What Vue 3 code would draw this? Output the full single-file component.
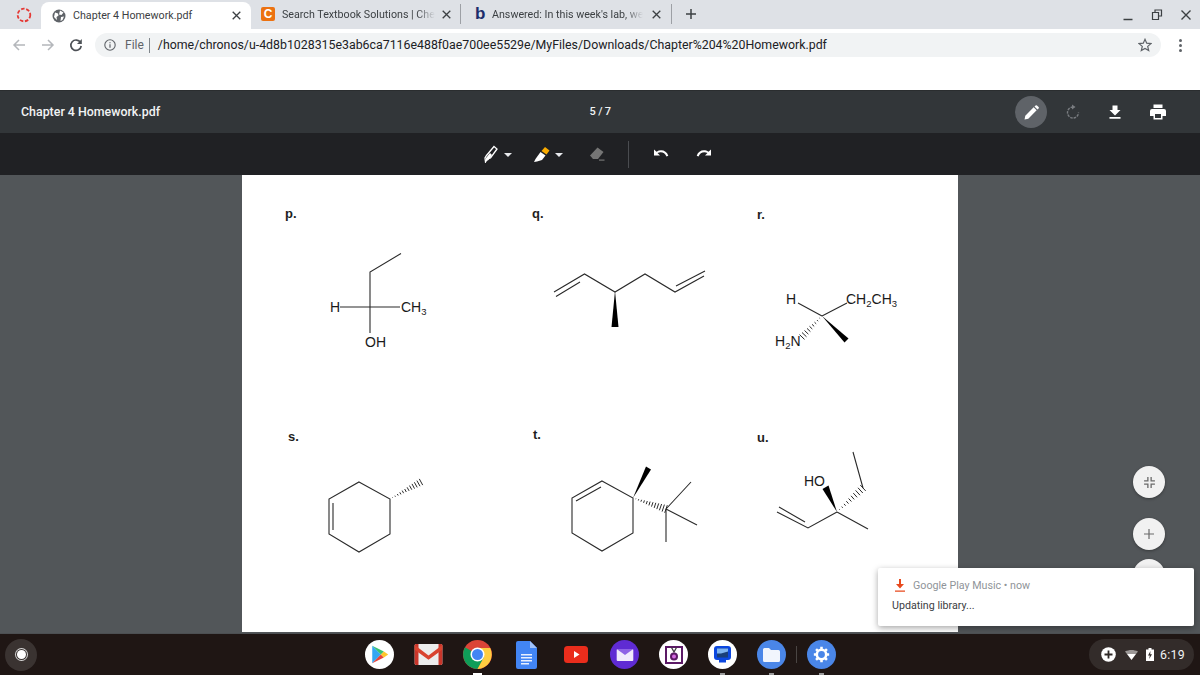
<script setup>
function hash(x1, y1, x2, y2, w, n) {
  const dx = x2 - x1
  const dy = y2 - y1
  const len = Math.hypot(dx, dy)
  const nx = -dy / len
  const ny = dx / len
  let d = ''
  for (let i = 1; i <= n; i++) {
    const t = i / n
    const x = x1 + dx * t
    const y = y1 + dy * t
    const h = (w * t) / 2
    d += `M${(x + nx * h).toFixed(1)} ${(y + ny * h).toFixed(1)}L${(x - nx * h).toFixed(1)} ${(y - ny * h).toFixed(1)}`
  }
  return d
}
const hashes = [
  hash(822, 316, 802, 337, 7, 9),
  hash(390, 499, 421, 482, 7, 12),
  hash(633, 498, 666, 509, 8, 12),
  hash(837, 512, 863, 488, 8, 10)
]
</script>

<template>
  <div class="screen">
    <div class="tabstrip">
      <div class="spinner">
        <svg width="16" height="16" viewBox="0 0 16 16"><circle cx="8" cy="8" r="6.300" fill="none" stroke="#e53935" stroke-width="1.800" stroke-dasharray="3.500 1.700"/></svg>
      </div>
      <div class="tab active">
        <svg class="fav" width="14" height="14" viewBox="0 0 14 14"><circle cx="7" cy="7" r="6.500" fill="#5f6368"/><path d="M3 3.500l3 1 .5 2-2 1.500L5 11 2 8zM8 1.500l3.500 2-2 2.500-2.500-.5zM9 8l3-.5-1.500 3.500L8.500 12z" fill="#fff"/></svg>
        <span class="tabtext">Chapter 4 Homework.pdf</span>
        <svg class="tabclose" width="9" height="9" viewBox="0 0 9 9"><path d="M.7.7l7.600 7.600M8.300.7L.7 8.300" stroke="#3c4043" stroke-width="1.300"/></svg>
      </div>
      <div class="tab second">
        <span class="cfav">C</span>
        <span class="tabtext fade">Search Textbook Solutions | Che</span>
        <svg class="tabclose" width="9" height="9" viewBox="0 0 9 9"><path d="M.7.7l7.600 7.600M8.300.7L.7 8.300" stroke="#3c4043" stroke-width="1.300"/></svg>
      </div>
      <div class="tab third">
        <span class="bfav">b</span>
        <span class="tabtext fade">Answered: In this week's lab, we</span>
        <svg class="tabclose" width="9" height="9" viewBox="0 0 9 9"><path d="M.7.7l7.600 7.600M8.300.7L.7 8.300" stroke="#3c4043" stroke-width="1.300"/></svg>
      </div>
      <div class="newtab">
        <svg width="12" height="12" viewBox="0 0 12 12"><path d="M6 1v10M1 6h10" stroke="#3c4043" stroke-width="1.500"/></svg>
      </div>
      <div class="winctl">
        <svg width="12" height="12" viewBox="0 0 12 12"><path d="M1.500 10.500h9" stroke="#3c4043" stroke-width="1.500"/></svg>
        <svg width="12" height="12" viewBox="0 0 12 12"><path d="M1.500 3.500v7h6v-7zM4 3V1h6.500v6H8" fill="none" stroke="#3c4043" stroke-width="1.200"/></svg>
        <svg width="12" height="12" viewBox="0 0 12 12"><path d="M1.500 1.500l9 9M10.500 1.500l-9 9" stroke="#3c4043" stroke-width="1.400"/></svg>
      </div>
    </div>

    <div class="toolbar">
      <div class="navbtns">
        <svg width="16" height="16" viewBox="0 0 16 16"><path d="M14 8H3M8 3L3 8l5 5" fill="none" stroke="#b4b7bb" stroke-width="1.500"/></svg>
        <svg width="16" height="16" viewBox="0 0 16 16"><path d="M2 8h11M8 3l5 5-5 5" fill="none" stroke="#b4b7bb" stroke-width="1.500"/></svg>
        <svg width="14" height="14" viewBox="0 0 14 14"><path d="M11.500 4.500A5.200 5.200 0 1 0 12.200 8" fill="none" stroke="#4d5156" stroke-width="1.700"/><path d="M12.800 1v5H8z" fill="#4d5156"/></svg>
      </div>
      <div class="omnibox">
        <svg width="12" height="12" viewBox="0 0 12 12"><circle cx="6" cy="6" r="5.200" fill="none" stroke="#5f6368" stroke-width="1.100"/><path d="M6 5.200v3.600M6 3.200v1.100" stroke="#5f6368" stroke-width="1.200"/></svg>
        <span class="file">File</span>
        <span class="osep"></span>
        <span class="url">/home/chronos/u-4d8b1028315e3ab6ca7116e488f0ae700ee5529e/MyFiles/Downloads/Chapter%204%20Homework.pdf</span>
        <svg class="star" width="14" height="14" viewBox="0 0 14 14"><path d="M7 1.300l1.700 3.900 4.200.4-3.200 2.800 1 4.100L7 10.400l-3.700 2.100 1-4.100L1.100 5.600l4.200-.4z" fill="none" stroke="#5f6368" stroke-width="1.200"/></svg>
      </div>
      <div class="dots"><i></i><i></i><i></i></div>
    </div>

    <div class="viewer">
      <div class="pdfhead">
        <span class="pdftitle">Chapter 4 Homework.pdf</span>
        <span class="pagenum">5 / 7</span>
        <div class="pdfactions">
          <span class="penbtn">
            <svg width="15" height="15" viewBox="0 0 14 14"><path d="M0.500 13.500l.7-3.500L9 2.200l2.800 2.800-7.800 7.800zM9.800 1.400l1-1a1 1 0 0 1 1.300 0l1.500 1.500a1 1 0 0 1 0 1.300l-1 1z" fill="#fff"/></svg>
          </span>
          <svg class="act" width="16" height="16" viewBox="0 0 16 16"><path d="M8 3a5.500 5.500 0 1 0 5.500 5.500" fill="none" stroke="#797c80" stroke-width="1.400" stroke-dasharray="2.500 1"/><path d="M7 .5L10.500 3 7 5.500z" fill="#797c80"/></svg>
          <svg class="act" width="16" height="16" viewBox="0 0 16 16"><path d="M5.500 1.500h5V6h3L8 11.500 2.500 6h3zM2.500 13h11v1.800h-11z" fill="#fff"/></svg>
          <svg class="act" width="18" height="18" viewBox="0 0 18 18"><path d="M4.500 1.500h9v3.500h-9zM3 6h12a2 2 0 0 1 2 2v5h-3.500v3.500h-9V13H1V8a2 2 0 0 1 2-2z" fill="#fff"/><path d="M6 11h6v4H6z" fill="#323639"/></svg>
        </div>
      </div>

      <div class="annot">
        <svg class="pen" width="14" height="18" viewBox="0 0 14 18"><path d="M10 1.500l3 2.500-6.500 9L3 14l-1.500 3-.5-4 1.500-2.500z" fill="none" stroke="#fff" stroke-width="1.300"/><path d="M2 13l4-5 2 2-3.500 5-2.500 1.500z" fill="#fff"/></svg>
        <i class="caret c1"></i>
        <svg class="hl" width="18" height="18" viewBox="0 0 18 18"><path d="M12 2l4.500 3.500-3 4-5-3.500z" fill="#f9ab00"/><path d="M7.500 7l5 3.500-3.500 4.500-5 1.500-3 .5 1.500-3z" fill="#fff"/></svg>
        <i class="caret c2"></i>
        <svg class="er" width="18" height="16" viewBox="0 0 18 16"><path d="M9.500 1.500l6 4.500L10 13H5L2 9.500z" fill="#757575"/><path d="M11 13.500h5.500v1.200H11z" fill="#757575"/></svg>
        <span class="asep"></span>
        <svg class="undo" width="16" height="12" viewBox="0 0 16 12"><path d="M1 1.500v6h6L4.500 5c3.500-1.800 7.500-.5 9 3.500l1.800-.8C13.500 2.500 8 .8 3.500 3.800z" fill="#fff"/></svg>
        <svg class="redo" width="16" height="12" viewBox="0 0 16 12"><path d="M15 1.500v6H9L11.500 5C8 3.200 4 4.500 2.500 8.500L.7 7.700C2.500 2.500 8 .8 12.500 3.800z" fill="#fff"/></svg>
      </div>

      <div class="stage">
        <svg class="page" width="716" height="457" viewBox="242 175 716 457">
          <rect x="242" y="175" width="716" height="457" fill="#fff"/>
          <g class="lab" font-family="'Liberation Sans', Arial, sans-serif" font-size="13" fill="#1e1e1e" font-weight="700">
            <text x="285" y="218">p.</text>
            <text x="532" y="218">q.</text>
            <text x="757" y="219">r.</text>
            <text x="288" y="441">s.</text>
            <text x="533" y="439">t.</text>
            <text x="757" y="442">u.</text>
          </g>
          <g fill="none" stroke="#2a2a2a" stroke-width="1.100">
            <path d="M401 253.500L370 272V333M340 307H400"/>
            <path d="M554 292L584.500 274L615 292L645 274L675 292L704 276M556 296.500L580 282M676 286L705 271"/>
            <path d="M822 316L798 303M822 316L847 303"/>
            <path d="M359 482L390 499V534L359 552L329 534V499ZM333 503V530"/>
            <path d="M602 481L633 498V533L602 551L572 533V498ZM576 501L601 487M666 509L691 482M666 509L697 525M666 509V542"/>
            <path d="M837 512L868 529M837 512L808 528L777 512M805 522L779 507M863 488L853 452"/>
          </g>
          <path d="M615 291L618.500 327H611.500Z" fill="#000"/>
          <path d="M822 316L848.500 338.500L844.500 342.500Z" fill="#000"/>
          <path d="M633 498L651 469.500L646 466.500Z" fill="#000"/>
          <path d="M837 512L828.500 485.500L822.500 489Z" fill="#000"/>
          <path v-for="(d, i) in hashes" :key="i" :d="d" stroke="#2a2a2a" stroke-width="1" fill="none"/>
          <g font-family="'Liberation Sans', Arial, sans-serif" font-size="14" fill="#1a1a1a">
            <text x="330" y="312">H</text>
            <text x="401" y="312">CH<tspan font-size="9.500" dy="3">3</tspan></text>
            <text x="365" y="347">OH</text>
            <text x="786" y="304">H</text>
            <text x="846" y="304">CH<tspan font-size="9.500" dy="3">2</tspan><tspan dy="-3">CH</tspan><tspan font-size="9.500" dy="3">3</tspan></text>
            <text x="775" y="346">H<tspan font-size="9.500" dy="3">2</tspan><tspan dy="-3">N</tspan></text>
            <text x="804" y="486">HO</text>
          </g>
        </svg>

        <button class="fab fab1">
          <svg width="13" height="13" viewBox="0 0 12 12"><path d="M4.500 1v3.500H1M7.500 1v3.500H11M4.500 11V7.500H1M7.500 11V7.500H11" fill="none" stroke="#6a6a6a" stroke-width="1.200"/></svg>
        </button>
        <button class="fab fab2">
          <svg width="12" height="12" viewBox="0 0 12 12"><path d="M6 1v10M1 6h10" stroke="#6a6a6a" stroke-width="1.200"/></svg>
        </button>
        <button class="fab fab3"></button>

        <div class="notice">
          <div class="nhead">
            <svg width="12" height="14" viewBox="0 0 12 14"><path d="M5 1h2v5h3L6 10.500 2 6h3zM1 12.500h10v1.200H1z" fill="#e8491d"/></svg>
            <span>Google Play Music • now</span>
          </div>
          <div class="nbody">Updating library...</div>
        </div>
      </div>
    </div>

    <div class="shelf">
      <div class="launcher"><span></span></div>
      <div class="apps">
        <div class="app"><span class="disc white">
          <svg width="18" height="19" viewBox="0 0 20 22"><path d="M1 1v20l10-10z" fill="#35a7f3"/><path d="M1 1l10 10 3.500-3.500z" fill="#38c172"/><path d="M1 21l10-10 3.500 3.500z" fill="#e8433a"/><path d="M14.500 7.500L11 11l3.500 3.500L19.500 11z" fill="#fdc62b"/></svg>
        </span></div>
        <div class="app">
          <svg width="29" height="21" viewBox="0 0 29 22"><rect width="29" height="22" rx="1.500" fill="#ececec"/><path d="M0 1.500A1.500 1.500 0 0 1 1.500 0H4v22H1.500A1.500 1.500 0 0 1 0 20.500zM25 0h2.500A1.500 1.500 0 0 1 29 1.500v19a1.500 1.500 0 0 1-1.500 1.500H25z" fill="#c9362b"/><path d="M0 1l14.500 11L29 1v5L14.500 16.500 0 6z" fill="#d9432f"/></svg>
        </div>
        <div class="app on">
          <svg width="29" height="29" viewBox="0 0 29 29"><circle cx="14.500" cy="14.500" r="14.500" fill="#db4437"/><path d="M14.500 14.500L2 7.300A14.500 14.500 0 0 0 14.500 29L21.700 17z" fill="#0f9d58"/><path d="M14.500 8H27.200A14.500 14.500 0 0 1 14.500 29L21 17z" fill="#ffcd40"/><circle cx="14.500" cy="14.500" r="7" fill="#fff"/><circle cx="14.500" cy="14.500" r="5.500" fill="#4285f4"/></svg>
        </div>
        <div class="app">
          <svg width="21" height="28" viewBox="0 0 21 28"><path d="M2 0h12l7 7v19a2 2 0 0 1-2 2H2a2 2 0 0 1-2-2V2a2 2 0 0 1 2-2z" fill="#4285f4"/><path d="M14 0l7 7h-7z" fill="#a1c2fa"/><path d="M5 13h11v1.400H5zM5 16h11v1.400H5zM5 19h11v1.400H5zM5 22h8v1.400H5z" fill="#e8f0fe"/></svg>
        </div>
        <div class="app">
          <svg width="24" height="17" viewBox="0 0 24 17"><rect width="24" height="17" rx="3.500" fill="#ea2d1c"/><path d="M10 5l5.500 3.500L10 12z" fill="#fff"/></svg>
        </div>
        <div class="app"><span class="disc purple">
          <svg width="18" height="12" viewBox="0 0 18 13"><rect width="18" height="13" rx="1" fill="#f0eafc"/><path d="M0 0h18L9 6.500z" fill="#8e63e6"/></svg>
        </span></div>
        <div class="app"><span class="disc white">
          <svg width="18" height="18" viewBox="0 0 18 18"><rect x="1" y="1" width="16" height="16" fill="#fff" stroke="#5c1a66" stroke-width="2"/><path d="M6.500 1.500L9 6l2.500-4.500" fill="none" stroke="#3c3c3c" stroke-width="1.300"/><circle cx="9" cy="10.500" r="4" fill="#5c1a66"/><circle cx="9" cy="10.500" r="2" fill="#d46be0"/></svg>
        </span></div>
        <div class="app dim"><span class="disc white">
          <svg width="17" height="17" viewBox="0 0 17 17"><rect width="17" height="14" rx="3" fill="#0b47e0"/><rect x="3" y="2.500" width="11" height="9" fill="#1a3f78"/><path d="M3 2.500h11v3L7 7.500H3z" fill="#7fb4ef"/><rect x="5" y="14" width="7" height="2.500" fill="#0b47e0"/></svg>
        </span></div>
        <div class="app dim"><span class="disc blue">
          <svg width="17" height="14" viewBox="0 0 17 14"><path d="M1.500 0H6l2 2h7.500A1.500 1.500 0 0 1 17 3.500v9a1.500 1.500 0 0 1-1.500 1.500h-14A1.500 1.500 0 0 1 0 12.500v-11A1.500 1.500 0 0 1 1.500 0z" fill="#f1f5fd"/></svg>
        </span></div>
        <span class="shelfsep"></span>
        <div class="app dim"><span class="disc blue">
          <svg width="17" height="17" viewBox="0 0 20 20"><circle cx="10" cy="10" r="5.500" fill="none" stroke="#fff" stroke-width="3"/><path d="M10 1v3M10 16v3M1 10h3M16 10h3M3.600 3.600l2.100 2.100M14.300 14.300l2.100 2.100M3.600 16.400l2.100-2.100M14.300 5.700l2.100-2.100" stroke="#fff" stroke-width="3"/></svg>
        </span></div>
      </div>
      <div class="tray">
        <svg width="15" height="15" viewBox="0 0 15 15"><circle cx="7.500" cy="7.500" r="7.300" fill="#fff"/><path d="M7.500 3.500v8M3.500 7.500h8" stroke="#2e2826" stroke-width="1.800"/></svg>
        <svg width="13" height="10" viewBox="0 0 13 10"><path d="M0 1.500C4 -.5 9 -.5 13 1.500L11 4H2z" fill="#9c9897"/><path d="M2 4h9L6.500 10z" fill="#fff"/></svg>
        <svg class="batt" width="8" height="13" viewBox="0 0 8 13"><path d="M2.500 0h3v1.500H8V13H0V1.500h2.500z" fill="#fff"/><path d="M4.500 3L2 7.500h1.800L3.200 11l2.800-4.700H4.200z" fill="#2e2826"/></svg>
        <span class="clock">6:19</span>
      </div>
    </div>
  </div>
</template>

<style scoped>
.screen {
  width: 1200px;
  height: 675px;
  display: flex;
  flex-direction: column;
  overflow: hidden;
  background: #fff;
  font-family: Roboto, "Liberation Sans", Arial, sans-serif;
}
.tabstrip {
  height: 29px;
  flex: none;
  background: #dee1e6;
  display: flex;
  align-items: flex-end;
  padding-left: 16px;
  color: #3c4043;
}
.spinner {
  width: 25px;
  height: 29px;
  display: flex;
  align-items: center;
}
.tab {
  display: flex;
  align-items: center;
  font-size: 10.700px;
  box-sizing: border-box;
  flex: none;
}
.active {
  width: 210px;
  height: 27px;
  background: #fff;
  border-radius: 8px 8px 0 0;
  padding: 0 10px 0 10px;
}
.fav {
  flex: none;
  margin-right: 7px;
  margin-left: 1px;
}
.tabtext { white-space: nowrap; }
.tabclose {
  flex: none;
  margin-left: auto;
}
.second {
  width: 210px;
  height: 20px;
  margin-bottom: 5px;
  padding: 0 9px 0 10px;
  border-right: 1px solid #9da0a5;
}
.third {
  width: 211px;
  height: 20px;
  margin-bottom: 5px;
  padding: 0 10px 0 14px;
  border-right: 1px solid #9da0a5;
}
.fade {
  -webkit-mask-image: linear-gradient(90deg, #000 88%, transparent);
  mask-image: linear-gradient(90deg, #000 88%, transparent);
}
.cfav {
  width: 14px;
  height: 14px;
  flex: none;
  border-radius: 2px;
  background: #ec7211;
  color: #fff;
  font-weight: 700;
  font-size: 12px;
  line-height: 14px;
  text-align: center;
  margin-right: 7px;
  font-family: "Liberation Sans", sans-serif;
}
.bfav {
  width: 10px;
  flex: none;
  color: #1c2d6b;
  font-weight: 700;
  font-size: 17px;
  line-height: 14px;
  margin-right: 7px;
  font-family: "Liberation Sans", sans-serif;
}
.newtab {
  width: 12px;
  height: 12px;
  display: flex;
  margin: 0 0 9px 13px;
}
.winctl {
  margin-left: auto;
  display: flex;
  gap: 17px;
  margin-right: 8px;
  height: 20px;
  align-items: flex-start;
  margin-bottom: 3px;
  padding-top: 3px;
  box-sizing: border-box;
}
.toolbar {
  height: 61px;
  flex: none;
  display: flex;
  align-items: flex-start;
  padding-top: 4px;
  box-sizing: border-box;
  background: #fff;
}
.navbtns {
  width: 95px;
  height: 24px;
  display: flex;
  align-items: center;
  gap: 13px;
  padding-left: 11px;
  box-sizing: border-box;
}
.omnibox {
  width: 1066px;
  height: 24px;
  background: #f1f3f4;
  border-radius: 12px;
  display: flex;
  align-items: center;
  padding-left: 9px;
  box-sizing: border-box;
  font-size: 12.350px;
  color: #3c4043;
}
.file {
  margin-left: 9px;
  font-size: 12px;
  color: #5f6368;
}
.osep {
  width: 1px;
  height: 15px;
  background: #80868b;
  margin: 0 8px 0 5px;
}
.url {
  white-space: nowrap;
  color: #202124;
}
.star { margin-left: auto; margin-right: 9px; }
.dots {
  width: 39px;
  height: 24px;
  display: flex;
  flex-direction: column;
  align-items: center;
  justify-content: center;
  gap: 2px;
}
.dots i {
  width: 3px;
  height: 3px;
  border-radius: 50%;
  background: #5f6368;
}
.viewer {
  flex: 1;
  min-height: 0;
  display: flex;
  flex-direction: column;
  background: #525659;
}
.pdfhead {
  height: 43px;
  flex: none;
  background: #323639;
  border-top: 1px solid #2a2d2f;
  box-sizing: border-box;
  display: grid;
  grid-template-columns: 1fr auto 1fr;
  align-items: center;
  padding: 0 21px;
  color: #f1f3f4;
}
.pdftitle {
  font-size: 12.400px;
  font-weight: 500;
  margin-bottom: 2px;
}
.pagenum {
  font-size: 11px;
  letter-spacing: .3px;
  word-spacing: -1px;
  font-weight: 500;
  margin-left: 1px;
  margin-bottom: 2px;
}
.pdfactions {
  justify-self: end;
  display: flex;
  align-items: center;
  padding-right: 12px;
}
.penbtn {
  width: 32px;
  height: 32px;
  border-radius: 50%;
  background: #5f6368;
  display: flex;
  align-items: center;
  justify-content: center;
  margin-right: 18px;
}
.act { margin-right: 26px; flex: none; }
.act:last-child { margin-right: 0; }
.annot {
  height: 42px;
  flex: none;
  background: #202124;
  display: flex;
  align-items: center;
  padding-left: 484px;
  box-sizing: border-box;
}
.caret {
  width: 0;
  height: 0;
  border-left: 4px solid transparent;
  border-right: 4px solid transparent;
  border-top: 4px solid #e8eaed;
}
.c1 { margin: 2px 0 0 6px; }
.hl { margin-left: 21px; }
.c2 { margin: 2px 0 0 4px; }
.er { margin-left: 25px; }
.asep {
  width: 1px;
  height: 27px;
  background: #4a4c50;
  margin-left: 22px;
}
.undo { margin-left: 24px; }
.redo { margin-left: 27px; }
.stage {
  flex: 1;
  min-height: 0;
  position: relative;
  overflow: hidden;
  display: flex;
  justify-content: center;
  align-items: flex-start;
}
.page {
  display: block;
  flex: none;
}
.fab {
  position: absolute;
  left: 1133px;
  width: 32px;
  height: 32px;
  padding: 0;
  border: 0;
  border-radius: 50%;
  background: #f1f1f1;
  box-shadow: 0 1px 3px rgba(0, 0, 0, .35);
  display: flex;
  align-items: center;
  justify-content: center;
}
.fab1 { top: 291px; }
.fab2 { top: 343px; }
.fab3 { top: 384px; }
.notice {
  position: absolute;
  left: 878px;
  top: 393px;
  width: 316px;
  height: 58px;
  background: #fff;
  border-radius: 2px;
  box-shadow: 0 2px 6px rgba(0, 0, 0, .35);
  box-sizing: border-box;
  padding: 10px 14px 0;
  font-size: 10.700px;
}
.nhead {
  display: flex;
  align-items: center;
  gap: 7px;
  color: #8f9499;
  padding-left: 2px;
  height: 14px;
}
.nbody {
  margin-top: 7px;
  color: #3c4043;
}
.shelf {
  height: 42px;
  flex: none;
  background: #1f1614;
  border-top: 1px solid #4c4f52;
  box-sizing: border-box;
  display: flex;
  align-items: center;
  position: relative;
}
.launcher {
  width: 32px;
  height: 32px;
  border-radius: 50%;
  background: #3a3331;
  margin-left: 5px;
  display: flex;
  align-items: center;
  justify-content: center;
}
.launcher span {
  width: 9px;
  height: 9px;
  border-radius: 50%;
  background: #fff;
  box-shadow: 0 0 0 1px #3a3331, 0 0 0 2px #d8d8d8;
}
.apps {
  display: flex;
  align-items: center;
  margin-left: 318px;
}
.app {
  width: 49px;
  height: 41px;
  display: flex;
  align-items: center;
  justify-content: center;
  position: relative;
  flex: none;
}
.app.on::after,
.app.dim::after {
  content: "";
  position: absolute;
  left: 20px;
  bottom: 0;
  width: 9px;
  height: 2px;
  background: #fff;
}
.app.dim::after {
  left: 22px;
  width: 5px;
  background: #9a9a9a;
}
.disc {
  width: 29px;
  height: 29px;
  border-radius: 50%;
  display: flex;
  align-items: center;
  justify-content: center;
}
.white { background: #fff; }
.purple { background: #5f2bd3; }
.blue { background: #4a86e8; }
.shelfsep {
  width: 1px;
  height: 17px;
  background: #4a4543;
  flex: none;
}
.tray {
  position: absolute;
  left: 1089px;
  top: 5px;
  width: 105px;
  height: 31px;
  border-radius: 16px;
  background: #332c2a;
  display: flex;
  align-items: center;
  padding-left: 12px;
  box-sizing: border-box;
  color: #f1f3f4;
  font-size: 12.300px;
  gap: 9px;
}
.batt { margin-left: -1px; }
.clock { margin-left: -3px; letter-spacing: .3px; }
</style>

<style>
html, body { margin: 0; background: #1f1614; }
</style>
